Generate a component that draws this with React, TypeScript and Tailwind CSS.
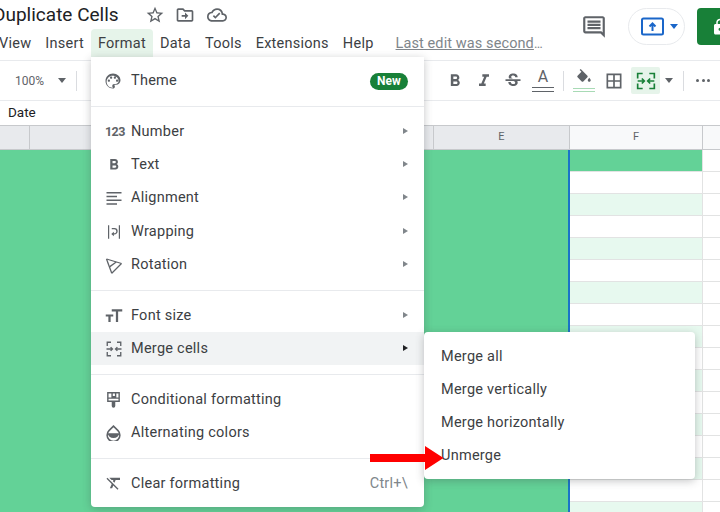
import React from "react";

const font = { fontFamily: "Roboto, 'Liberation Sans', sans-serif" };

function Ico({ children, size = 20, className = "" }: { children: React.ReactNode; size?: number; className?: string }) {
  return (
    <svg width={size} height={size} viewBox="0 0 24 24" fill="#5f6368" className={className}>
      {children}
    </svg>
  );
}

const icons: Record<string, React.ReactNode> = {
  theme: (
    <path d="M12 2C6.49 2 2 6.49 2 12s4.49 10 10 10c1.38 0 2.5-1.12 2.5-2.5 0-.61-.23-1.2-.64-1.67-.08-.1-.13-.21-.13-.33 0-.28.22-.5.5-.5H16c3.31 0 6-2.69 6-6 0-4.96-4.49-9-10-9zm5.5 11c-.83 0-1.5-.67-1.5-1.5s.67-1.5 1.5-1.5 1.5.67 1.5 1.5-.67 1.5-1.5 1.5zm-3-4c-.83 0-1.5-.67-1.5-1.5S13.67 6 14.5 6s1.5.67 1.5 1.5S15.33 9 14.5 9zM5 11.5c0-.83.67-1.5 1.5-1.5s1.5.67 1.5 1.5S7.33 13 6.5 13 5 12.33 5 11.5zm6-4c0 .83-.67 1.5-1.5 1.5S8 8.33 8 7.5 8.67 6 9.5 6s1.5.67 1.5 1.5zM13.5 16c-1.38 0-2.5 1.12-2.5 2.5 0 .61.23 1.2.64 1.67.08.09.13.21.13.33 0 .28-.22.5-.5.5-4.4-.06-7.77-3.5-7.77-8 0-4.41 3.59-8 8-8s8 3.14 8 7c0 2.21-1.79 4-4 4h-2z" />
  ),
  text: <path d="M15.6 10.79c.97-.67 1.65-1.77 1.65-2.79 0-2.26-1.75-4-4-4H7v14h7.04c2.09 0 3.71-1.7 3.71-3.79 0-1.52-.86-2.82-2.15-3.42zM10 6.5h3c.83 0 1.5.67 1.5 1.5s-.67 1.5-1.5 1.5h-3v-3zm3.5 9H10v-3h3.5c.83 0 1.5.67 1.5 1.5s-.67 1.5-1.5 1.5z" />,
  align: <path d="M2 4h20v2H2V4zm0 5h14v2H2V9zm0 5h20v2H2v-2zm0 5h14v2H2v-2z" />,
  wrap: (
    <g>
      <path d="M4 3h1.6v18H4zM18.4 3H20v18h-1.6z" />
      <path d="M9 7.5h3.5a3.5 3.5 0 0 1 0 7H11" fill="none" stroke="#5f6368" strokeWidth="1.8" />
      <path d="M11.8 11.5v6l-3.5-3z" />
    </g>
  ),
  rotate: (
    <g fill="none" stroke="#5f6368" strokeWidth="1.7" strokeLinejoin="round">
      <path d="M2 4l20 6" />
      <path d="M2 4l7 19" />
      <path d="M6 14.5L15 8" />
      <path d="M22 10l-13 13" />
    </g>
  ),
  size: <path d="M9 3v3h5.5v14h3V6H23V3H9zM1 10v2.5h3.5V20h3v-7.5H11V10H1z" />,
  merge: (
    <g fill="none" stroke="#5f6368" strokeWidth="1.8">
      <path d="M3 8V3h5M3 16v5h5M21 8V3h-5M21 16v5h-5" />
      <path d="M2 12h8M7.5 9.5L10 12l-2.5 2.5M22 12h-8M16.5 9.5L14 12l2.5 2.5" />
    </g>
  ),
  cond: <path fillRule="evenodd" d="M3 1.5h18v14h-6.5v5.5a2.5 2.5 0 0 1-5 0v-5.5H3v-14zM5 11v2.5h14V11H5zm0-7.5V9h4V3.5H5zm6 0V7h3V3.5h-3zm5 0V9h3V3.5h-3z" />,
  alt: (
    <g>
      <path d="M12 3 5.6 9.4a9 9 0 1 0 12.8 0L12 3z" fill="none" stroke="#5f6368" strokeWidth="2.2" />
      <path d="M3.6 13h16.8a8.6 8.6 0 0 1-16.8 0z" />
    </g>
  ),
  clear: <path d="M3.27 5 2 6.27l6.97 6.97L6.5 19h3l1.57-3.66L16.73 21 18 19.73 3.55 5.27 3.27 5zM6 5v.18L8.82 8h2.4l-.72 1.68 2.1 2.1L14.21 8H20V5H6z" />,
};

const Row = ({ icon, label, arrow, right, active, dark }: { icon?: string; label: string; arrow?: boolean; right?: React.ReactNode; active?: boolean; dark?: boolean }) => (
  <div className={`flex items-center h-[33.2px] pl-[14px] pr-[16px] ${active ? "bg-[#f1f3f4]" : ""}`}>
    <span className="w-[26px] flex items-center">
      {icon ? (
        <Ico size={icon === "alt" || icon === "cond" ? 17 : 18}>{icons[icon]}</Ico>
      ) : (
        <span className="text-[12.5px] font-bold tracking-[-0.6px] text-[#5f6368] leading-none">123</span>
      )}
    </span>
    <span className="text-[14.5px] tracking-[0.25px] text-[#3c4043]">{label}</span>
    <span className="flex-1" />
    {right}
    {arrow && <span className={`w-0 h-0 -translate-y-[1px] border-y-[3.5px] border-y-transparent border-l-[5.5px] ${dark ? "border-l-[#202124]" : "border-l-[#80868b]"}`} />}
  </div>
);

const Sep = () => <div className="h-px bg-[#e8eaed] my-[8.3px]" />;

const TopLabel = ({ children, active }: { children: React.ReactNode; active?: boolean }) => (
  <span className={`h-[28px] flex items-center pt-[1px] px-[7px] rounded-t-[4px] ${active ? "bg-[#e6f4ea]" : ""}`}>{children}</span>
);

function Cols() {
  const rows = Array.from({ length: 16 }, (_, i) => i);
  return (
    <div className="flex h-[362px] overflow-hidden">
      <div className="w-[570px] bg-[#63d297] border-r-2 border-[#1a73c8]" />
      <div className="w-[133px] border-r border-[#e2e3e3]">
        <div className="h-[22px] bg-[#63d297] border-b border-[#e2e3e3]" />
        {rows.map((i) => (
          <div key={i} className={`h-[22px] border-b border-[#e2e3e3] ${i % 2 === 1 ? "bg-[#e7f9ef]" : "bg-white"}`} />
        ))}
      </div>
      <div className="flex-1">
        {rows.map((i) => (
          <div key={i} className="h-[22px] border-b border-[#e2e3e3]" />
        ))}
      </div>
    </div>
  );
}

export default function App() {
  return (
    <div style={font} className="relative w-[720px] h-[512px] overflow-hidden bg-white">
      {/* title */}
      <div className="flex items-center h-[29px] pt-[1px] -ml-[7px] text-[19px] text-[#202124]">
        <span className="w-[152px] whitespace-nowrap">Duplicate Cells</span>
        <span className="flex gap-[10px] items-center">
          <svg width="20" height="20" viewBox="0 0 24 24" fill="#5f6368"><path d="M22 9.24l-7.19-.62L12 2 9.19 8.63 2 9.24l5.46 4.73L5.82 21 12 17.27 18.18 21l-1.63-7.03L22 9.24zM12 15.4l-3.76 2.27 1-4.28-3.32-2.88 4.38-.38L12 6.1l1.71 4.04 4.38.38-3.32 2.88 1 4.28L12 15.4z" /></svg>
          <svg width="20" height="20" viewBox="0 0 24 24" fill="#5f6368"><path d="M20 6h-8l-2-2H4c-1.1 0-2 .9-2 2v12c0 1.1.9 2 2 2h16c1.1 0 2-.9 2-2V8c0-1.1-.9-2-2-2zm0 12H4V6h5.17l2 2H20v10zm-8-1 4-4-4-4v3H8v2h4v3z" /></svg>
          <svg className="ml-[2px]" width="20" height="20" viewBox="0 0 24 24" fill="#5f6368"><path d="M19.35 10.04A7.49 7.49 0 0 0 12 4C9.11 4 6.6 5.64 5.35 8.04A5.994 5.994 0 0 0 0 14c0 3.31 2.69 6 6 6h13c2.76 0 5-2.24 5-5 0-2.64-2.05-4.78-4.65-4.96zM19 18H6c-2.21 0-4-1.79-4-4s1.79-4 4-4h.71C7.37 7.69 9.48 6 12 6c3.04 0 5.5 2.46 5.5 5.5v.5H19c1.66 0 3 1.34 3 3s-1.34 3-3 3zm-9-1.5-3-3 1.4-1.4 1.6 1.6 4.6-4.6 1.4 1.4-6 6z" /></svg>
        </span>
      </div>
      {/* right header */}
      <div className="absolute top-[8px] left-[581px] flex items-center">
        <svg width="26" height="26" viewBox="0 0 24 24" fill="#5f6368"><path d="M20 2H4c-1.1 0-2 .9-2 2v12c0 1.1.9 2 2 2h14l4 4V4c0-1.1-.9-2-2-2zm0 15.17L18.83 16H4V4h16v13.17zM6 12h12v2H6zm0-3h12v2H6zm0-3h12v2H6z" /></svg>
        <div className="ml-[21px] w-[57px] h-[37px] rounded-full border border-[#e8eaed] flex items-center pl-[12px] gap-[5px]">
          <svg width="24" height="20" viewBox="0 0 24 20" fill="none"><rect x="1" y="1.5" width="21" height="16" rx="1.5" stroke="#1a66c9" strokeWidth="2" /><path d="M11.5 14V7M8.5 9.5l3-3 3 3" stroke="#1a66c9" strokeWidth="2" /></svg>
          <span className="w-0 h-0 border-x-[4px] border-x-transparent border-t-[5px] border-t-[#1a66c9]" />
        </div>
        <div className="ml-[12px] w-[40px] h-[37px] rounded-[4px] bg-[#188038] flex items-center pl-[14px]">
          <svg width="18" height="18" viewBox="0 0 24 24" fill="#fff"><path d="M18 8h-1V6c0-2.76-2.24-5-5-5S7 3.24 7 6v2H6c-1.1 0-2 .9-2 2v10c0 1.1.9 2 2 2h12c1.1 0 2-.9 2-2V10c0-1.1-.9-2-2-2zM9 6c0-1.66 1.34-3 3-3s3 1.34 3 3v2H9V6zm3 11a2 2 0 1 1 0-4 2 2 0 0 1 0 4z" /></svg>
        </div>
      </div>
      {/* menu */}
      <div className="flex items-center h-[28px] -ml-[8px] text-[14.5px] tracking-[0.25px] text-[#3c4043]">
        <TopLabel>View</TopLabel>
        <TopLabel>Insert</TopLabel>
        <TopLabel active>Format</TopLabel>
        <TopLabel>Data</TopLabel>
        <TopLabel>Tools</TopLabel>
        <TopLabel>Extensions</TopLabel>
        <TopLabel>Help</TopLabel>
        <span className="ml-[15px] pt-[1px] text-[#80868b] underline tracking-[0.1px]">Last edit was second</span>
        <span className="pt-[1px] text-[#80868b] text-[13px]">…</span>
      </div>
      <div className="h-[3px]" />
      {/* toolbar */}
      <div className="flex items-center h-[41px] border-y border-[#e8eaed] text-[#5f6368]">
        <span className="ml-[15px] text-[12px]">100%</span>
        <span className="ml-[14px] w-0 h-0 border-x-[4px] border-x-transparent border-t-[5px] border-t-[#5f6368]" />
        <span className="ml-[10px] w-px h-[20px] bg-[#dadce0]" />
        <span className="ml-[368px] flex items-center gap-[9px]">
          <Ico size={20}><path d="M15.6 10.79c.97-.67 1.65-1.77 1.65-2.79 0-2.26-1.75-4-4-4H7v14h7.04c2.09 0 3.71-1.7 3.71-3.79 0-1.52-.86-2.82-2.15-3.42zM10 6.5h3c.83 0 1.5.67 1.5 1.5s-.67 1.5-1.5 1.5h-3v-3zm3.5 9H10v-3h3.5c.83 0 1.5.67 1.5 1.5s-.67 1.5-1.5 1.5z" /></Ico>
          <Ico size={20}><path d="M10 4v3h2.21l-3.42 8H6v3h8v-3h-2.21l3.42-8H18V4z" /></Ico>
          <Ico size={20}><path d="M7.24 8.75c-.26-.48-.39-1.03-.39-1.67 0-.61.13-1.16.4-1.67.26-.5.63-.93 1.11-1.29.48-.35 1.05-.63 1.7-.83.66-.19 1.39-.29 2.18-.29.81 0 1.54.11 2.21.34.66.22 1.23.54 1.69.94.47.4.83.88 1.08 1.43s.38 1.15.38 1.81h-3.01c0-.31-.05-.59-.15-.85-.09-.27-.24-.49-.44-.68-.2-.19-.45-.33-.75-.44-.3-.1-.66-.16-1.06-.16-.39 0-.74.04-1.03.13s-.53.21-.72.36c-.19.16-.34.34-.44.55-.1.21-.15.43-.15.66 0 .48.25.88.74 1.21.38.25.77.48 1.41.7H7.39c-.05-.08-.11-.17-.15-.25zM21 12v-2H3v2h9.62c.18.07.4.14.55.2.37.17.66.34.87.51s.35.36.43.57c.07.2.11.43.11.69 0 .23-.05.45-.14.66-.09.2-.23.38-.42.53-.19.15-.42.26-.71.35-.29.08-.63.13-1.01.13-.43 0-.83-.04-1.18-.13s-.66-.23-.91-.42c-.25-.19-.45-.44-.59-.75s-.25-.76-.25-1.21H6.4c0 .55.08 1.13.24 1.58s.37.85.65 1.21c.28.35.6.66.98.92.37.26.78.48 1.22.65.44.17.9.3 1.38.39.48.08.96.13 1.44.13.8 0 1.53-.09 2.18-.28s1.21-.45 1.67-.79c.46-.34.82-.77 1.07-1.27s.38-1.07.38-1.71c0-.6-.1-1.14-.31-1.61-.05-.11-.11-.23-.17-.33H21z" /></Ico>
          <span className="flex flex-col items-center w-[22px]">
            <span className="text-[16px] leading-[16px] text-[#5f6368]">A</span>
            <span className="mt-[2px] w-[22px] h-[5px] border-y-[1.5px] border-[#5f6368]" />
          </span>
        </span>
        <span className="ml-[9px] w-px h-[20px] bg-[#dadce0]" />
        <span className="ml-[9px] flex flex-col items-center w-[22px]">
          <Ico size={18}><path d="M16.56 8.94 7.62 0 6.21 1.41l2.38 2.38-5.15 5.15a1.49 1.49 0 0 0 0 2.12l5.5 5.5c.29.29.68.44 1.06.44s.77-.15 1.06-.44l5.5-5.5c.59-.58.59-1.53 0-2.12zM19 11.5s-2 2.17-2 3.5c0 1.1.9 2 2 2s2-.9 2-2c0-1.33-2-3.5-2-3.5z" /></Ico>
          <span className="mt-[1px] w-[22px] h-[4px] border-y-[1.5px] border-[#a8dab5]" />
        </span>
        <span className="ml-[9px]"><Ico size={20}><path d="M3 3v18h18V3H3zm8 16H5v-6h6v6zm0-8H5V5h6v6zm8 8h-6v-6h6v6zm0-8h-6V5h6v6z" /></Ico></span>
        <span className="ml-[7px] w-[29px] h-[27px] rounded-[2px] bg-[#e6f4ea] flex items-center justify-center">
          <svg width="20" height="20" viewBox="0 0 24 24" fill="none" stroke="#188038" strokeWidth="2">
            <path d="M2 9V3h6M2 15v6h6M22 9V3h-6M22 15v6h-6" />
            <path d="M2 12h8m-3-3 3 3-3 3M22 12h-8m3-3-3 3 3 3" />
          </svg>
        </span>
        <span className="ml-[5px] w-0 h-0 border-x-[4px] border-x-transparent border-t-[5px] border-t-[#5f6368]" />
        <span className="ml-[10px] w-px h-[20px] bg-[#dadce0]" />
        <span className="ml-[12px] flex gap-[2.5px]">
          <span className="w-[3px] h-[3px] rounded-full bg-[#5f6368]" />
          <span className="w-[3px] h-[3px] rounded-full bg-[#5f6368]" />
          <span className="w-[3px] h-[3px] rounded-full bg-[#5f6368]" />
        </span>
      </div>
      {/* formula bar */}
      <div className="flex items-center h-[24px] pl-[8px] pb-[1px] text-[13.5px] text-[#202124]">Date</div>
      {/* col headers */}
      <div className="flex h-[25px] bg-[#e8eaed] border-y border-[#c7c9cc] text-[11px] text-[#5f6368]">
        <span className="w-[30px] border-r border-[#c7c9cc]" />
        <span className="w-[404px] border-r border-[#c7c9cc]" />
        <span className="w-[136px] border-r border-[#c7c9cc] flex items-center justify-center">E</span>
        <span className="w-[133px] bg-[#f8f9fa] border-r border-[#c7c9cc] flex items-center justify-center">F</span>
        <span className="flex-1 bg-[#f8f9fa]" />
      </div>
      <Cols />
      {/* format menu */}
      <div className="absolute left-[91px] top-[57px] w-[333px] h-[450px] bg-white rounded-b-[4px] shadow-[0_2px_8px_rgba(60,64,67,0.3)] pt-[7.6px]">
        <div className="flex items-center h-[33.2px] pl-[13px] pr-[16px]">
          <span className="w-[27px] flex items-center"><Ico size={18}>{icons.theme}</Ico></span>
          <span className="text-[14.5px] tracking-[0.25px] text-[#3c4043]">Theme</span>
          <span className="flex-1" />
          <span className="h-[17px] w-[38px] flex items-center justify-center rounded-full bg-[#188038] text-white text-[12px] font-bold">New</span>
        </div>
        <Sep />
        <Row label="Number" arrow />
        <Row icon="text" label="Text" arrow />
        <Row icon="align" label="Alignment" arrow />
        <Row icon="wrap" label="Wrapping" arrow />
        <Row icon="rotate" label="Rotation" arrow />
        <Sep />
        <Row icon="size" label="Font size" arrow />
        <Row icon="merge" label="Merge cells" arrow active dark />
        <Sep />
        <Row icon="cond" label="Conditional formatting" />
        <Row icon="alt" label="Alternating colors" />
        <Sep />
        <Row icon="clear" label="Clear formatting" right={<span className="text-[14.5px] text-[#80868b] tracking-[0.25px]">Ctrl+\</span>} />
      </div>
      {/* submenu */}
      <div className="absolute left-[424px] top-[332px] w-[271px] h-[147px] bg-white rounded-[4px] shadow-[0_2px_8px_rgba(60,64,67,0.3)] py-[8px] text-[14.5px] tracking-[0.25px] text-[#3c4043]">
        {["Merge all", "Merge vertically", "Merge horizontally", "Unmerge"].map((t) => (
          <div key={t} className="h-[33px] flex items-center pl-[17px]">{t}</div>
        ))}
      </div>
      {/* arrow */}
      <svg className="absolute left-[370px] top-[446px]" width="74" height="24" viewBox="0 0 74 24">
        <path d="M0 8h55V0l18.5 12L55 24v-8H0z" fill="#ff0000" />
      </svg>
    </div>
  );
}
